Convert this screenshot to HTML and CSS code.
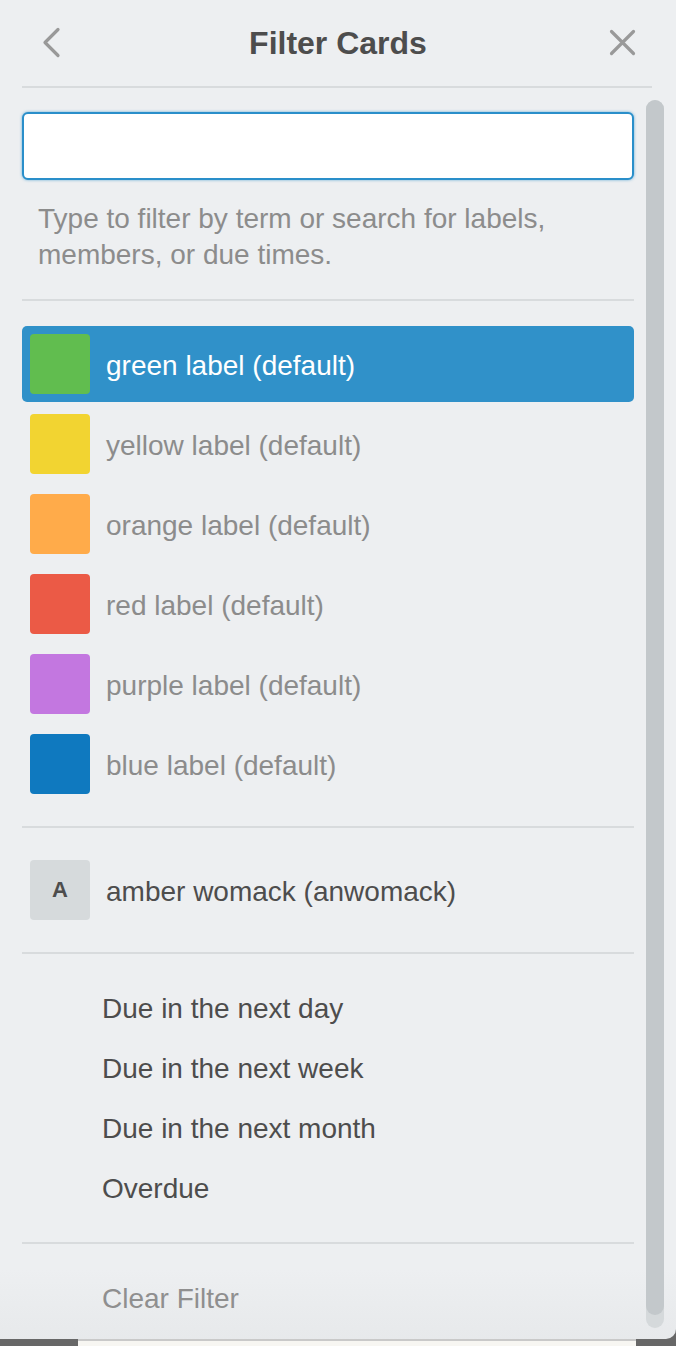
FILE: index.html
```html
<!DOCTYPE html>
<html lang="en">
<head>
<meta charset="utf-8">
<title>Filter Cards</title>
<link rel="stylesheet" href="styles.css">
</head>
<body>
<div class="panel">
  <header class="header">
    <button class="icon-btn back" aria-label="Back">
      <svg width="48" height="86" viewBox="0 0 48 86"><path d="M36 29.5 L23 42.5 L36 55.5" fill="none" stroke="#999" stroke-width="3.2" stroke-linecap="round" stroke-linejoin="round"/></svg>
    </button>
    <h1 class="title">Filter Cards</h1>
    <button class="icon-btn close" aria-label="Close">
      <svg width="48" height="86" viewBox="0 0 48 86"><path d="M5.5 31.5 L27.5 53.5 M27.5 31.5 L5.5 53.5" fill="none" stroke="#999" stroke-width="3.2" stroke-linecap="round"/></svg>
    </button>
  </header>
  <div class="body">
    <div class="content">
      <input class="search" type="text" aria-label="Filter">
      <p class="hint">Type to filter by term or search for labels, members, or due times.</p>
      <div class="divider"></div>
      <ul class="labels">
        <li class="row selected"><span class="swatch green"></span><span class="row-text">green label (default)</span></li>
        <li class="row"><span class="swatch yellow"></span><span class="row-text">yellow label (default)</span></li>
        <li class="row"><span class="swatch orange"></span><span class="row-text">orange label (default)</span></li>
        <li class="row"><span class="swatch red"></span><span class="row-text">red label (default)</span></li>
        <li class="row"><span class="swatch purple"></span><span class="row-text">purple label (default)</span></li>
        <li class="row"><span class="swatch blue"></span><span class="row-text">blue label (default)</span></li>
      </ul>
      <div class="divider"></div>
      <div class="row member"><span class="avatar">A</span><span class="row-text">amber womack (anwomack)</span></div>
      <div class="divider"></div>
      <ul class="due">
        <li class="due-item">Due in the next day</li>
        <li class="due-item">Due in the next week</li>
        <li class="due-item">Due in the next month</li>
        <li class="due-item">Overdue</li>
      </ul>
      <div class="divider"></div>
      <div class="due-item clear">Clear Filter</div>
    </div>
    <div class="scrollbar"><div class="thumb"></div></div>
  </div>
</div>
<div class="backdrop"><div class="card-edge"></div></div>
</body>
</html>
```

FILE: styles.css
```css
html, body {
  margin: 0;
  padding: 0;
}
body {
  background: #676767;
  font-family: "Liberation Sans", Arial, Helvetica, sans-serif;
  width: 676px;
  height: 1346px;
  overflow: hidden;
}
.panel {
  width: 676px;
  height: 1339px;
  box-sizing: border-box;
  padding-bottom: 11px;
  background: linear-gradient(to bottom, #edeff1 0, #edeff1 calc(100% - 70px), #e7e9eb 100%);
  border-bottom-right-radius: 10px;
  display: flex;
  flex-direction: column;
}
.header {
  margin: 0 24px 0 22px;
  height: 86px;
  border-bottom: 2px solid #d8dbdd;
  display: grid;
  grid-template-columns: 48px 1fr 46px;
  align-items: stretch;
}
.icon-btn {
  border: 0;
  background: none;
  padding: 0;
  margin: 0;
  width: 48px;
  height: 86px;
  display: block;
}
.icon-btn svg { display: block; }
.title {
  margin: 0;
  text-align: center;
  font-size: 32px;
  font-weight: bold;
  line-height: 86px;
  color: #4d4d4d;
}
.body {
  display: flex;
  align-items: flex-start;
}
.content {
  margin-left: 22px;
  width: 612px;
}
.search {
  display: block;
  margin: 24px 0 0;
  width: 100%;
  height: 68px;
  box-sizing: border-box;
  border: 2px solid #2a8fca;
  border-radius: 6px;
  background: #fff;
  box-shadow: 0 0 3px rgba(41, 143, 202, 0.7);
  outline: none;
  font: inherit;
  font-size: 28px;
  padding: 0 16px;
}
.hint {
  margin: 21px 16px 0;
  font-size: 28px;
  line-height: 36px;
  color: #8c8c8c;
}
.divider {
  height: 2px;
  background: #d8dbdd;
  margin-top: 26px;
}
.labels, .due {
  list-style: none;
  margin: 25px 0 0;
  padding: 0;
}
.labels {
  display: flex;
  flex-direction: column;
  gap: 4px;
}
.labels + .divider,
.member + .divider,
.due + .divider { margin-top: 24px; }
.row {
  height: 76px;
  box-sizing: border-box;
  padding: 0 8px;
  display: flex;
  align-items: center;
  gap: 16px;
  border-radius: 5px;
  font-size: 28px;
  color: #8c8c8c;
}
.row-text { padding-top: 3px; }
.row.selected {
  background: #3091c9;
  color: #fff;
}
.swatch {
  width: 60px;
  height: 60px;
  border-radius: 4px;
  flex: none;
}
.green { background: #61bd4f; }
.yellow { background: #f2d431; }
.orange { background: #ffab4a; }
.red { background: #eb5a46; }
.purple { background: #c377e0; }
.blue { background: #0f79bf; }
.member {
  margin-top: 24px;
  color: #4d4d4d;
}
.avatar {
  width: 60px;
  height: 60px;
  border-radius: 4px;
  background: #d6dadc;
  flex: none;
  display: flex;
  align-items: center;
  justify-content: center;
  font-weight: bold;
  font-size: 22px;
  color: #4d4d4d;
}
.due { margin-top: 24px; }
.due-item {
  height: 60px;
  box-sizing: border-box;
  padding: 1px 0 0 80px;
  line-height: 60px;
  font-size: 28px;
  color: #4d4d4d;
}
.clear {
  margin-top: 24px;
  color: #8f8f8f;
}
.scrollbar {
  margin: 12px 0 0 12px;
  width: 18px;
  height: 1228px;
  border-radius: 9px;
  background: #d5d9db;
}
.thumb {
  height: 1215px;
  border-radius: 9px;
  background: #c3c8cb;
}
.backdrop {
  height: 7px;
  display: flex;
}
.card-edge {
  margin-left: 78px;
  width: 558px;
  height: 7px;
  box-sizing: border-box;
  border-top: 2px solid #c9c9c9;
  background: #f7f6f2;
}
```
